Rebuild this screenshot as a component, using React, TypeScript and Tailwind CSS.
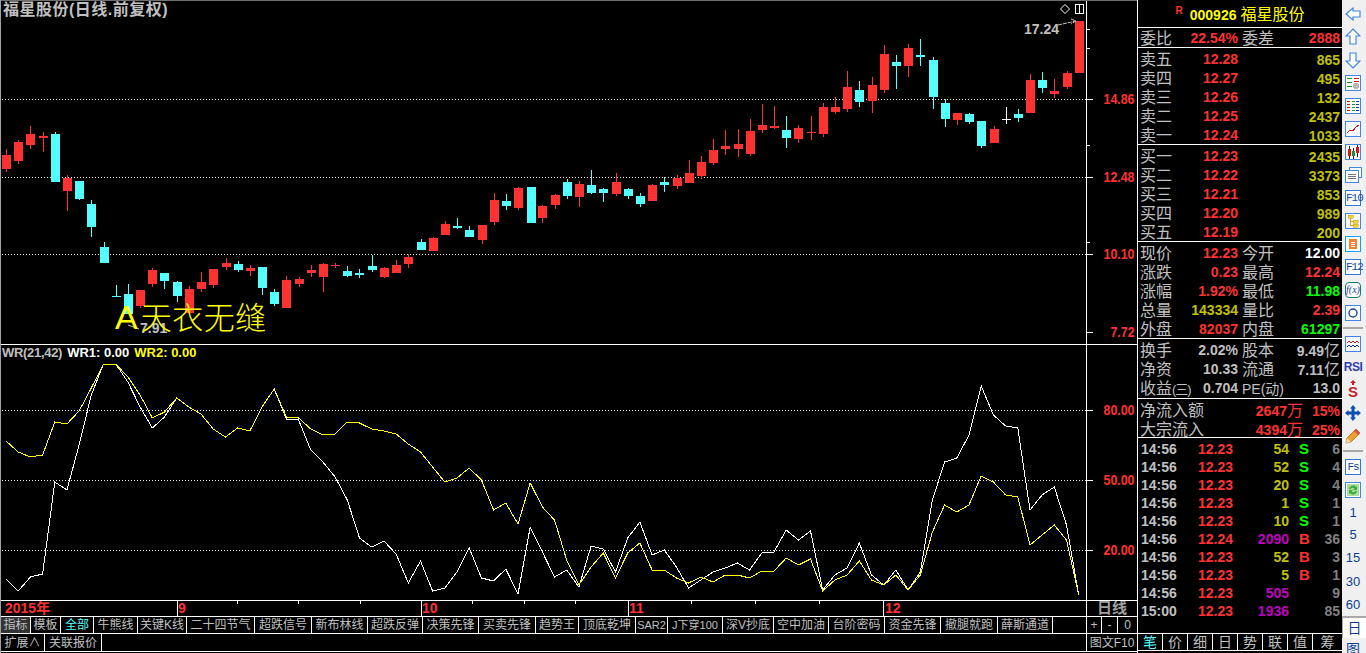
import React from 'react';

const RED = '#ff3232';
const CYAN = '#54ffff';

// x, bodyTop, bodyBottom, wickTop, wickBottom, colour
type Candle = [number, number, number, number, number, string];

const candles: Candle[] = [
  [6, 155, 169, 149, 172, 'r'], [18, 142, 161, 140, 164, 'r'], [30, 134, 145, 126, 149, 'r'], [43, 136, 138, 132, 152, 'r'],
  [55, 134, 182, 132, 182, 'c'], [67, 178, 191, 175, 211, 'r'], [79, 181, 199, 181, 200, 'c'], [91, 204, 227, 200, 237, 'c'],
  [104, 247, 263, 242, 263, 'c'], [116, 296, 297, 285, 297, 'c'], [128, 294, 314, 284, 314, 'c'], [140, 290, 306, 290, 308, 'r'],
  [152, 270, 284, 268, 287, 'r'], [164, 273, 281, 273, 289, 'c'], [177, 282, 296, 281, 302, 'c'], [189, 289, 313, 286, 313, 'r'],
  [201, 282, 289, 272, 292, 'r'], [213, 269, 285, 269, 288, 'r'], [226, 263, 267, 258, 270, 'r'], [238, 264, 270, 261, 272, 'c'],
  [250, 268, 271, 265, 276, 'r'], [262, 267, 288, 267, 295, 'c'], [274, 292, 304, 289, 306, 'c'], [286, 280, 308, 276, 308, 'r'],
  [299, 279, 284, 277, 287, 'r'], [311, 270, 273, 265, 277, 'r'], [323, 264, 277, 263, 292, 'r'], [335, 265, 266, 263, 268, 'r'],
  [347, 271, 276, 266, 277, 'c'], [359, 273, 275, 269, 278, 'c'], [372, 266, 270, 255, 272, 'c'], [384, 268, 277, 267, 278, 'r'],
  [396, 265, 273, 260, 273, 'r'], [408, 257, 264, 254, 268, 'r'], [421, 242, 250, 239, 250, 'c'], [433, 238, 251, 237, 251, 'r'],
  [445, 224, 235, 221, 235, 'r'], [457, 226, 228, 218, 229, 'c'], [469, 230, 237, 226, 237, 'c'], [482, 225, 240, 225, 244, 'r'],
  [494, 200, 222, 193, 225, 'r'], [506, 201, 206, 194, 210, 'c'], [518, 188, 208, 187, 210, 'r'], [531, 187, 223, 187, 223, 'c'],
  [542, 206, 218, 205, 223, 'r'], [555, 195, 205, 194, 209, 'r'], [567, 182, 196, 179, 199, 'c'], [579, 184, 197, 181, 207, 'r'],
  [591, 185, 193, 170, 194, 'c'], [603, 189, 193, 188, 202, 'c'], [616, 182, 194, 173, 196, 'r'], [628, 189, 196, 188, 199, 'c'],
  [640, 196, 204, 193, 207, 'c'], [652, 185, 201, 184, 201, 'r'], [664, 182, 185, 177, 192, 'c'], [677, 178, 186, 175, 189, 'r'],
  [689, 173, 183, 160, 183, 'r'], [701, 162, 176, 156, 179, 'r'], [713, 150, 163, 139, 165, 'r'], [725, 146, 149, 130, 155, 'r'],
  [738, 144, 149, 129, 157, 'r'], [750, 131, 154, 119, 156, 'r'], [762, 125, 130, 104, 133, 'r'], [774, 126, 128, 106, 129, 'r'],
  [786, 130, 138, 116, 148, 'c'], [798, 128, 139, 125, 143, 'r'], [811, 132, 133, 116, 140, 'r'], [823, 107, 134, 103, 137, 'r'],
  [835, 107, 112, 97, 114, 'r'], [847, 87, 109, 71, 112, 'r'], [859, 90, 102, 81, 107, 'c'], [872, 85, 101, 77, 113, 'r'],
  [884, 54, 90, 45, 93, 'r'], [896, 62, 66, 55, 89, 'c'], [908, 48, 66, 44, 77, 'r'], [920, 55, 57, 39, 66, 'c'],
  [933, 60, 97, 57, 109, 'c'], [945, 103, 119, 99, 127, 'c'], [957, 113, 120, 113, 125, 'r'], [969, 114, 122, 113, 124, 'c'],
  [981, 121, 146, 121, 148, 'c'], [994, 129, 143, 126, 143, 'r'], [1006, 119, 120, 107, 124, 'w'], [1018, 114, 118, 109, 122, 'c'],
  [1030, 80, 113, 74, 113, 'r'], [1042, 80, 88, 72, 93, 'c'], [1054, 91, 94, 79, 98, 'r'], [1067, 73, 87, 71, 89, 'r'],
  [1079, 21, 73, 21, 73, 'r'],
];

const wr1 = [
  579, 591, 577, 574, 482, 490, 445, 395, 364, 364, 382, 407, 428, 417, 398, 407, 414, 429, 437, 428, 431, 407, 389, 419, 420, 450, 462, 477,
  500, 538, 547, 541, 554, 583, 561, 591, 588, 572, 548, 578, 581, 569, 594, 527, 552, 577, 570, 587, 546, 549, 572, 538, 522, 555, 550, 567,
  588, 580, 572, 568, 563, 570, 553, 552, 530, 540, 531, 590, 575, 568, 543, 575, 585, 570, 590, 572, 500, 462, 458, 435, 386, 415, 426, 428,
  510, 495, 487, 525, 595,
];
const wr2 = [
  441, 452, 457, 455, 422, 424, 411, 388, 364, 364, 377, 395, 418, 412, 398, 407, 414, 429, 437, 428, 431, 407, 389, 417, 418, 429, 435, 434,
  422, 423, 429, 431, 434, 444, 452, 467, 482, 478, 468, 480, 510, 503, 524, 483, 507, 520, 560, 585, 567, 553, 578, 553, 543, 570, 570, 578,
  583, 577, 582, 575, 575, 578, 571, 571, 558, 565, 559, 591, 580, 575, 561, 580, 585, 575, 590, 575, 532, 505, 512, 505, 476, 482, 495, 497,
  545, 535, 525, 540, 595,
];
const toPoints = (ys: number[]) => ys.map((y, i) => `${(6 + i * 12.19).toFixed(1)},${y}`).join(' ');

const Dotted = ({ y }: { y: number }) => (
  <line x1={2} x2={1086} y1={y + 0.5} y2={y + 0.5} stroke="#e8e8e8" strokeDasharray="1 2" shapeRendering="crispEdges" />
);

const PriceChart = () => (
  <svg className="w-[1085px] h-[343px] block" viewBox="1 1 1085 343">
    {[99, 177, 254].map((y) => <Dotted key={y} y={y} />)}
    {candles.map(([x, top, bottom, wickTop, wickBottom, c], i) => {
      const fill = c === 'r' ? RED : c === 'c' ? CYAN : '#ffffff';
      return (
        <g key={i} fill={fill} shapeRendering="crispEdges">
          <rect x={x} y={wickTop} width={1} height={wickBottom - wickTop} />
          <rect x={x - 4} y={top} width={9} height={bottom - top} />
        </g>
      );
    })}
    <text x={1024} y={34} fill="#c0c0c0" fontSize={14} fontWeight={700}>17.24</text>
    <path d="M1058 25 L1076 21 M1071 19 L1076 21 L1071 24" stroke="#c0c0c0" fill="none" strokeDasharray="4 1" />
    <text x={140} y={333} fill="#c0c0c0" fontSize={14} fontWeight={700}>7.91</text>
    <path d="M128 325 L139 329" stroke="#c0c0c0" fill="none" />
    <polygon points="1065,4.5 1069.5,9 1065,13.5 1060.5,9" fill="none" stroke="#fff" />
    <path d="M1075.5 4.5 H1083.5 V13.5 H1075.5 Z M1079.5 4.5 V13.5" fill="none" stroke="#fff" shapeRendering="crispEdges" />
  </svg>
);

// axis digits are tall and narrow in the picture, so the run is squeezed to its width
const AxisLabel = ({ text, y }: { text: string; y: number }) => {
  const width = text.length === 5 ? 31 : 24;
  return (
    <text x={1134.5 - width} y={y} fill={RED} fontSize={14} fontWeight={700} textLength={width} lengthAdjust="spacingAndGlyphs">
      {text}
    </text>
  );
};

const PriceAxis = () => (
  <svg className="w-[50px] h-[343px] block" viewBox="1087 1 50 343">
    <g stroke="#fff" shapeRendering="crispEdges">
      {[29, 48, 145, 242].map((y) => <line key={y} x1={1087} x2={1090} y1={y + 0.5} y2={y + 0.5} />)}
      {[99, 177, 254, 332].map((y) => <line key={y} x1={1087} x2={1093} y1={y + 0.5} y2={y + 0.5} />)}
    </g>
    <AxisLabel text="14.86" y={104} />
    <AxisLabel text="12.48" y={182} />
    <AxisLabel text="10.10" y={259} />
    <AxisLabel text="7.72" y={337} />
  </svg>
);

const WrChart = () => (
  <svg className="w-[1085px] h-[255px] block" viewBox="1 345 1085 255">
    {[410, 480, 550].map((y) => <Dotted key={y} y={y} />)}
    <polyline points={toPoints(wr1)} fill="none" stroke="#ffffff" strokeWidth={1} shapeRendering="crispEdges" />
    <polyline points={toPoints(wr2)} fill="none" stroke="#ffff00" strokeWidth={1} shapeRendering="crispEdges" />
  </svg>
);

const WrAxis = () => (
  <svg className="w-[50px] h-[255px] block" viewBox="1087 345 50 255">
    {([['80.00', 410], ['50.00', 480], ['20.00', 550]] as [string, number][]).map(([t, y]) => (
      <g key={t}>
        <line x1={1087} x2={1093} y1={y + 0.5} y2={y + 0.5} stroke="#fff" shapeRendering="crispEdges" />
        <AxisLabel text={t} y={y + 5} />
      </g>
    ))}
  </svg>
);

const DateAxis = () => (
  <svg className="w-[1085px] h-[15px] block" viewBox="1 601 1085 15">
    <g stroke="#fff" shapeRendering="crispEdges">
      {[177, 421, 628, 883].map((x) => <line key={x} x1={x + 0.5} x2={x + 0.5} y1={601} y2={616} />)}
      {[237, 298, 360, 472, 524, 575, 691, 755, 819].map((x) => <line key={x} x1={x + 0.5} x2={x + 0.5} y1={601} y2={604} />)}
    </g>
    <g fill={RED} fontSize={14} fontWeight={700}>
      <text x={5} y={613}>2015年</text>
      <text x={178} y={613}>9</text>
      <text x={422} y={613}>10</text>
      <text x={629} y={613}>11</text>
      <text x={885} y={613}>12</text>
    </g>
  </svg>
);

// tab label and its right edge, so the column widths follow the picture
const tabs: [string, number][] = [
  ['指标', 30], ['模板', 60], ['全部', 93], ['牛熊线', 137], ['关键K线', 186], ['二十四节气', 254], ['超跌信号', 311], ['新布林线', 367],
  ['超跌反弹', 422], ['决策先锋', 478], ['买卖先锋', 535], ['趋势王', 578], ['顶底乾坤', 635], ['SAR2', 667], ['J下穿100', 722], ['深V抄底', 773],
  ['空中加油', 828], ['台阶密码', 884], ['资金先锋', 940], ['撤腿就跑', 997], ['薛斯通道', 1052],
];

const TabRow = () => (
  <div className="flex h-[17px] border-b border-white text-[12px] leading-[17px] text-[#c0c0c0] whitespace-nowrap">
    {tabs.map(([label, right], i) => (
      <div
        key={label}
        className={`border-r border-white text-center ${i === 0 ? 'bg-[#333333]' : ''} ${i === 2 ? 'text-[#54ffff]' : ''} ${i === 13 || i === 14 ? 'text-[11px]' : ''}`}
        style={{ width: right + 1 - (i === 0 ? 1 : tabs[i - 1][1] + 1) }}
      >
        {label}
      </div>
    ))}
  </div>
);

const Row = ({ children, className = '' }: { children: React.ReactNode; className?: string }) => (
  <div className={`flex items-center h-[19px] pl-[2px] pr-[2px] ${className}`}>{children}</div>
);

const Lbl = ({ children }: { children: React.ReactNode }) => (
  <span className="text-[16px] leading-[19px] text-[#c0c0c0] whitespace-nowrap">{children}</span>
);

const Num = ({ children, color = RED }: { children: React.ReactNode; color?: string }) => (
  <span className="text-[14px] leading-[19px] font-bold whitespace-nowrap" style={{ color }}>{children}</span>
);

const Pair = ({ l1, v1, c1, l2, v2, c2 }: { l1: React.ReactNode; v1: string; c1?: string; l2: React.ReactNode; v2: React.ReactNode; c2?: string }) => (
  <Row>
    <div className="flex justify-between w-[98px]"><Lbl>{l1}</Lbl><Num color={c1}>{v1}</Num></div>
    <div className="flex justify-between flex-1 pl-[4px]"><Lbl>{l2}</Lbl><Num color={c2}>{v2}</Num></div>
  </Row>
);

const OLIVE = '#c0c000';
const GREY = '#c0c0c0';
const GREEN = '#00ff00';
const MAGENTA = '#c000c0';

const Book = ({ rows }: { rows: string[][] }) => (
  <div className="h-[97px] pt-[2px] border-b border-white">
    {rows.map(([name, price, vol]) => (
      <Row key={name}>
        <div className="flex justify-between w-[98px]"><Lbl>{name}</Lbl><Num>{price}</Num></div>
        <div className="flex-1 text-right"><Num color={OLIVE}>{vol}</Num></div>
      </Row>
    ))}
  </div>
);

const trades: [string, string, string, string, string, string][] = [
  ['14:56', '12.23', '54', OLIVE, 'S', '6'], ['14:56', '12.23', '52', OLIVE, 'S', '4'], ['14:56', '12.23', '20', OLIVE, 'S', '4'],
  ['14:56', '12.23', '1', OLIVE, 'S', '1'], ['14:56', '12.23', '10', OLIVE, 'S', '1'], ['14:56', '12.24', '2090', MAGENTA, 'B', '36'],
  ['14:56', '12.23', '52', OLIVE, 'B', '3'], ['14:56', '12.23', '5', OLIVE, 'B', '1'], ['14:56', '12.23', '505', MAGENTA, '', '9'],
  ['15:00', '12.23', '1936', MAGENTA, '', '85'],
];

const SidePanel = () => (
  <div className="w-[205px] border-l border-white flex flex-col">
    <div className="h-[28px] pt-[3px] border-b border-white flex items-center justify-center">
      <span className="text-[10px] font-bold text-[#ff3232] self-start mr-[7px]">R</span>
      <span className="text-[14px] font-bold text-[#ffff00]">000926</span>
      <span className="text-[16px] text-[#ffff00] ml-[4px]">福星股份</span>
    </div>
    <div className="h-[20px] pt-px border-b border-white">
      <Pair l1="委比" v1="22.54%" l2="委差" v2="2888" />
    </div>
    <Book rows={[['卖五', '12.28', '865'], ['卖四', '12.27', '495'], ['卖三', '12.26', '132'], ['卖二', '12.25', '2437'], ['卖一', '12.24', '1033']]} />
    <Book rows={[['买一', '12.23', '2435'], ['买二', '12.22', '3373'], ['买三', '12.21', '853'], ['买四', '12.20', '989'], ['买五', '12.19', '200']]} />
    <div className="h-[97px] pt-[2px] border-b border-white">
      <Pair l1="现价" v1="12.23" l2="今开" v2="12.00" c2="#ffffff" />
      <Pair l1="涨跌" v1="0.23" l2="最高" v2="12.24" />
      <Pair l1="涨幅" v1="1.92%" l2="最低" v2="11.98" c2={GREEN} />
      <Pair l1="总量" v1="143334" c1={OLIVE} l2="量比" v2="2.39" />
      <Pair l1="外盘" v1="82037" l2="内盘" v2="61297" c2={GREEN} />
    </div>
    <div className="h-[60px] pt-[2px] border-b border-white">
      <Pair l1="换手" v1="2.02%" c1={GREY} l2="股本" v2={<>9.49<span className="font-normal text-[16px]">亿</span></>} c2={GREY} />
      <Pair l1="净资" v1="10.33" c1={GREY} l2="流通" v2={<>7.11<span className="font-normal text-[16px]">亿</span></>} c2={GREY} />
      <Pair
        l1={<>收益<span className="text-[13px] tracking-[-1px]">(三)</span></>}
        v1="0.704"
        c1={GREY}
        l2={<span className="text-[14px]">PE(动)</span>}
        v2="13.0"
        c2={GREY}
      />
    </div>
    <div className="h-[39px] pt-[2px] border-b border-white">
      {[['净流入额', '2647', '15%'], ['大宗流入', '4394', '25%']].map(([name, amount, pct]) => (
        <Row key={name}>
          <div className="w-[100px]"><Lbl>{name}</Lbl></div>
          <div className="w-[63px] text-right">
            <Num>{amount}<span className="font-normal text-[16px]">万</span></Num>
          </div>
          <div className="flex-1 text-right"><Num>{pct}</Num></div>
        </Row>
      ))}
    </div>
    <div className="h-[196px] pt-[2px] border-b border-white">
      {trades.map(([time, price, vol, volColor, side, count], i) => (
        <div key={i} className="flex items-center h-[18px] pl-[3px] text-[14px] leading-[18px] font-bold">
          <span className="w-[48px] text-[#c0c0c0]">{time}</span>
          <span className="w-[44px] text-right text-[#ff3232]">{price}</span>
          <span className="w-[56px] text-right" style={{ color: volColor }}>{vol}</span>
          <span className={`w-[20px] pl-[10px] text-[15px] ${side === 'S' ? 'text-[#00ff00]' : 'text-[#ff3232]'}`}>{side}</span>
          <span className="flex-1 pr-[2px] text-right text-[#808080]">{count}</span>
        </div>
      ))}
    </div>
    <div className="h-[17px] flex border-b border-white text-[14px] leading-[16px] text-[#c0c0c0] text-center">
      {['笔', '价', '细', '日', '势', '联', '值', '筹'].map((t, i) => (
        <div
          key={t}
          className={`${i === 7 ? 'flex-1' : 'w-[25px]'} ${i < 7 ? 'border-r border-white' : ''} ${i === 0 ? 'text-[#54ffff]' : ''}`}
        >
          {t}
        </div>
      ))}
    </div>
  </div>
);

const BLUE = '#3f86e6';

const Box = ({ children, stroke = BLUE }: { children?: React.ReactNode; stroke?: string }) => (
  <svg width="16" height="16" viewBox="0 0 16 16" shapeRendering="crispEdges">
    <rect x="0.5" y="0.5" width="15" height="15" fill="#ffffff" stroke={stroke} />
    {children}
  </svg>
);

const Arrow = ({ points }: { points: string }) => (
  <svg width="16" height="18" viewBox="0 0 16 18">
    <polygon points={points} fill="#ffffff" stroke={BLUE} strokeWidth={1.2} />
  </svg>
);

const TextBox = ({ children }: { children: string }) => (
  <div className="w-[16px] h-[16px] border border-[#2f78e0] bg-white text-[11px] leading-[14px] text-center text-[#14479e] font-['Liberation_Mono',monospace] tracking-[-1px]">
    {children}
  </div>
);

const ToolItem = ({ children }: { children: React.ReactNode }) => (
  <div className="h-[23px] shrink-0 flex items-center justify-center">{children}</div>
);

const Divider = () => <div className="h-[2px] shrink-0 my-[3px] mx-[1px] bg-[#a8a8a8]" />;

const Toolbar = () => (
  <div className="w-[24px] h-[653px] overflow-hidden bg-[#f0f0f0] flex flex-col pt-[2px] pr-[2px]">
    <ToolItem><Arrow points="1,9 8,3 8,6 15,6 15,12 8,12 8,15" /></ToolItem>
    <ToolItem><Arrow points="8,1 15,8 11,8 11,16 5,16 5,8 1,8" /></ToolItem>
    <ToolItem><Arrow points="8,17 15,10 11,10 11,2 5,2 5,10 1,10" /></ToolItem>
    <ToolItem>
      <Box>
        <path d="M2 3h5v1H2zM2 7h5v1H2zM2 11h5v1H2z" fill="#119911" />
        <path d="M9 3h5v1H9zM9 6h5v1H9z" fill="#e01010" />
        <circle cx="11" cy="11" r="3" fill="#b8b8b8" />
      </Box>
    </ToolItem>
    <ToolItem>
      <Box>
        <path d="M2 3h3v1H2zM2 6h3v1H2zM2 9h3v1H2zM2 12h3v1H2z" fill="#e01010" />
        <path d="M6.500 3h3v1h-3zM6.500 6h3v1h-3zM6.500 9h3v1h-3zM6.500 12h3v1h-3z" fill="#0a9a2a" />
        <path d="M11 3h3v1h-3zM11 6h3v1h-3zM11 9h3v1h-3zM11 12h3v1h-3z" fill="#1030d0" />
      </Box>
    </ToolItem>
    <ToolItem>
      <Box><polyline points="2,12 5,9 8,10 11,6 14,4" fill="none" stroke="#e01010" /></Box>
    </ToolItem>
    <ToolItem>
      <Box>
        <path d="M4 2h1v13H4zM8 4h1v11H8zM12 1h1v12h-1z" fill="#222222" />
        <path d="M3 5h3v7H3z" fill="#e01010" />
        <path d="M7 7h3v5H7z" fill="#0a9a2a" />
        <path d="M11 3h3v6h-3z" fill="#e01010" />
      </Box>
    </ToolItem>
    <ToolItem>
      <svg width="17" height="16" viewBox="0 0 17 16" shapeRendering="crispEdges">
        <rect x="4.500" y="0.500" width="12" height="10" fill="#ffffff" stroke={BLUE} />
        <rect x="0.500" y="3.500" width="13" height="12" fill="#ffffff" stroke={BLUE} />
        <path d="M3 7h8v1H3zM3 9h8v1H3zM3 11h8v1H3z" fill="#777777" />
      </svg>
    </ToolItem>
    <ToolItem><TextBox>F10</TextBox></ToolItem>
    <ToolItem>
      <Box>
        <path d="M3 2h5v3H3zM8 7h5v3H8zM8 11h5v3H8z" fill="#f6d040" stroke="#d8a020" strokeWidth="0.6" />
        <path d="M5 5v7h3M5 8h3" fill="none" stroke="#d8a020" />
      </Box>
    </ToolItem>
    <ToolItem>
      <Box stroke="#1a9cf0">
        <path d="M4 3h8v10H4z" fill="#f58030" />
        <path d="M6 6h4v1H6zM6 8h4v1H6zM6 10h4v1H6zM7 2h2v1H7z" fill="#ffffff" />
      </Box>
    </ToolItem>
    <ToolItem><TextBox>F12</TextBox></ToolItem>
    <ToolItem>
      <div className="w-[16px] h-[16px] rounded-[4px] border border-[#127878] bg-white text-[10px] leading-[14px] text-center italic text-[#14479e] font-['Liberation_Serif',serif]">
        f(x)
      </div>
    </ToolItem>
    <ToolItem>
      <Box><circle cx="8" cy="8" r="4" fill="none" stroke="#14479e" strokeWidth="1.4" shapeRendering="auto" /></Box>
    </ToolItem>
    <Divider />
    <ToolItem>
      <Box>
        <polyline points="2,7 4,5 6,7 8,5 10,7 12,5 14,7" fill="none" stroke="#e01010" />
        <polyline points="2,11 4,9 6,11 8,9 10,11 12,9 14,11" fill="none" stroke="#1030d0" />
      </Box>
    </ToolItem>
    <ToolItem><span className="text-[12px] font-bold text-[#2a3fb0] tracking-[-0.5px]">RSI</span></ToolItem>
    <ToolItem>
      <svg width="14" height="20" viewBox="0 0 14 20">
        <path d="M7 0l3 3H8v2H6V3H4z" fill="#c82020" />
        <text x="7" y="17" textAnchor="middle" fontSize="15" fontWeight="700" fill="#c02828">S</text>
      </svg>
    </ToolItem>
    <ToolItem>
      <svg width="16" height="16" viewBox="0 0 16 16">
        <path d="M8 0l3 3.500H9.500V6.500H12.500V5l3.500 3-3.500 3V9.500H9.500v3H11L8 16l-3-3.500h1.500v-3h-3V11L0 8l3.500-3v1.500h3v-3H5z" fill="#0a4fb8" />
      </svg>
    </ToolItem>
    <ToolItem>
      <svg width="16" height="16" viewBox="0 0 16 16">
        <polygon points="11,1 15,5 6,14 1,15 2,10" fill="#f0a030" stroke="#a86a10" strokeWidth="0.8" />
        <polygon points="11,1 15,5 13,7 9,3" fill="#e05050" />
        <polygon points="2,10 6,14 1,15" fill="#f5dcb0" />
      </svg>
    </ToolItem>
    <Divider />
    <ToolItem><TextBox>Fs</TextBox></ToolItem>
    <ToolItem>
      <Box>
        <rect x="2" y="2" width="12" height="12" fill="#a8dc98" />
        <path d="M4 7a4 4 0 0 1 7-2l1-1v4H8l1.500-1.500A2.500 2.500 0 0 0 5.500 7zM12 9a4 4 0 0 1-7 2l-1 1V8h4L6.500 9.500A2.500 2.500 0 0 0 10.500 9z" fill="#3caa3c" shapeRendering="auto" />
      </Box>
    </ToolItem>
    <div className="flex flex-col shrink-0 text-[13px] text-[#0b3f99] text-center font-['Liberation_Sans',sans-serif]">
      <div className="h-[23px] leading-[23px]">1</div>
      <div className="h-[22px] leading-[22px]">5</div>
      <div className="h-[24px] leading-[24px]">15</div>
      <div className="h-[23px] leading-[23px]">30</div>
      <div className="h-[23px] leading-[23px]">60</div>
    </div>
    <div className="h-[22px] shrink-0 -mr-[2px] border-t-2 border-l border-[#a8a8a8] bg-white text-[14px] leading-[20px] text-center text-[#0b3f99]">日</div>
    <div className="h-[22px] shrink-0 text-[14px] leading-[22px] text-center text-[#0b3f99]">图</div>
  </div>
);

export default function App() {
  return (
    <div className="w-[1366px] h-[653px] overflow-hidden flex bg-black font-['Liberation_Sans','Noto_Sans_CJK_SC',sans-serif]">
      <div className="w-[1137px] flex flex-col border-l border-[#a0a0a0]">
        <div className="h-px bg-[#6e6e6e]" />
        {/* kline pane */}
        <div className="relative flex h-[344px] border-b border-white">
          <PriceChart />
          <div className="border-l border-white w-[51px]"><PriceAxis /></div>
          <div className="absolute left-[2px] top-0 text-[16px] leading-[18px] font-bold text-[#c0c0c0] tracking-[0.5px] whitespace-nowrap">
            福星股份(日线.前复权)
          </div>
          <div className="absolute left-[114px] top-[296px] flex items-baseline text-[#ffff00] whitespace-nowrap">
            <span className="text-[34px] leading-[40px]">A</span>
            <span className="ml-[3px] text-[31px] leading-[40px] tracking-[0.5px] font-light">天衣无缝</span>
          </div>
        </div>
        {/* indicator pane */}
        <div className="relative flex h-[256px] border-b border-white">
          <WrChart />
          <div className="border-l border-white w-[51px]"><WrAxis /></div>
          <div className="absolute left-[1px] top-0 flex gap-[5px] text-[13px] leading-[16px] font-bold whitespace-nowrap">
            <span className="text-[#c0c0c0] tracking-[-0.3px]">WR(21,42)</span>
            <span className="text-[#ffffff]">WR1: 0.00</span>
            <span className="text-[#ffff00]">WR2: 0.00</span>
          </div>
        </div>
        <div className="flex h-[16px] border-b border-white">
          <DateAxis />
          <div className="w-[51px] border-l border-white text-[15px] leading-[13px] font-bold text-center text-[#a0a0a0]">日线</div>
        </div>
        <div className="flex h-[17px]">
          <div className="w-[1085px] overflow-hidden"><TabRow /></div>
          <div className="w-[51px] flex border-l border-b border-white text-[12px] leading-[16px] text-center text-[#c0c0c0]">
            <div className="w-[15px] border-r border-white">+</div>
            <div className="w-[16px] border-r border-white">-</div>
            <div className="flex-1">0</div>
          </div>
        </div>
        <div className="flex h-[18px] border-b border-white text-[12px] leading-[18px] text-[#c0c0c0] whitespace-nowrap">
          <div className="w-[44px] border-r border-white text-center">扩展∧</div>
          <div className="w-[57px] border-r border-white text-center">关联报价</div>
          <div className="flex-1" />
          <div className="w-[51px] border-l border-white text-center">图文F10</div>
        </div>
      </div>
      <SidePanel />
      <Toolbar />
    </div>
  );
}
